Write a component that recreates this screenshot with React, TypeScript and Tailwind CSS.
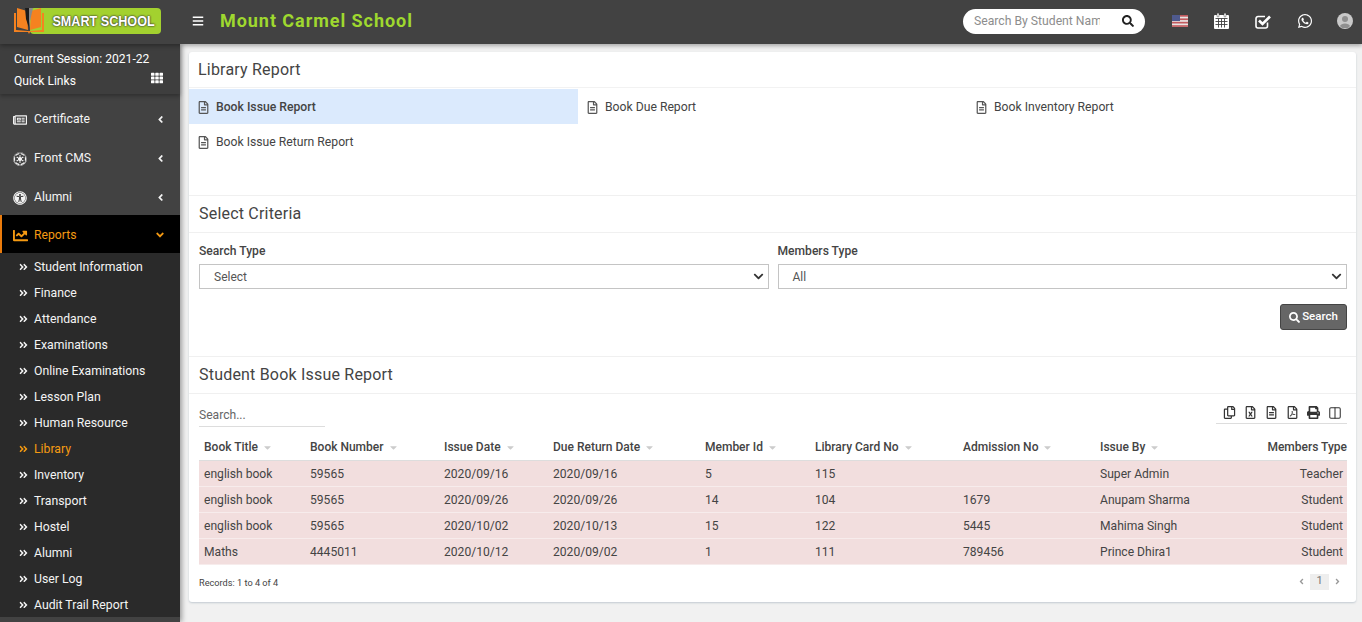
import {
  FaAngleDoubleRight,
  FaAngleDown,
  FaAngleLeft,
  FaBars,
  FaCaretDown,
  FaChartLine,
  FaChevronDown,
  FaEmpire,
  FaPrint,
  FaRegCopy,
  FaRegFileAlt,
  FaRegFileExcel,
  FaRegFilePdf,
  FaRegNewspaper,
  FaSearch,
  FaTh,
  FaUniversalAccess,
  FaWhatsapp,
} from "react-icons/fa";
import { Columns2 } from "lucide-react";

const subMenu = [
  "Student Information",
  "Finance",
  "Attendance",
  "Examinations",
  "Online Examinations",
  "Lesson Plan",
  "Human Resource",
  "Library",
  "Inventory",
  "Transport",
  "Hostel",
  "Alumni",
  "User Log",
  "Audit Trail Report",
];

const columns = [
  { label: "Book Title", width: "w-[106px]" },
  { label: "Book Number", width: "w-[134px]" },
  { label: "Issue Date", width: "w-[109px]" },
  { label: "Due Return Date", width: "w-[152px]" },
  { label: "Member Id", width: "w-[110px]" },
  { label: "Library Card No", width: "w-[148px]" },
  { label: "Admission No", width: "w-[137px]" },
  { label: "Issue By", width: "w-[122px]" },
];

const rows = [
  ["english book", "59565", "2020/09/16", "2020/09/16", "5", "115", "", "Super Admin", "Teacher"],
  ["english book", "59565", "2020/09/26", "2020/09/26", "14", "104", "1679", "Anupam Sharma", "Student"],
  ["english book", "59565", "2020/10/02", "2020/10/13", "15", "122", "5445", "Mahima Singh", "Student"],
  ["Maths", "4445011", "2020/10/12", "2020/09/02", "1", "111", "789456", "Prince Dhira1", "Student"],
];

function Logo() {
  return (
    <div className="flex h-[26px] w-[147px] items-center">
      <svg width="30" height="26" viewBox="0 0 30 26" className="z-10 -mr-[14px] shrink-0">
        <path d="M0 5 L0 24 L14 24 L15 26 L16 24 L30 24 L30 5 L28 5 L28 22 L16 23 L14 23 L2 22 L2 5 Z" fill="#f58220" />
        <path d="M3 0 L13 3 L14 22 L3 19 Z" fill="#f58220" />
        <path d="M27 0 L17 3 L16 22 L27 19 Z" fill="#f58220" />
        <path d="M11 0 L19 0 L16 13 L15 20 L14 13 Z" fill="#8a8a8a" />
        <path d="M11 0 L15 0 L15 20 L12 11 Z" fill="#1c1c1c" />
      </svg>
      <div className="flex h-[26px] flex-1 items-center justify-end rounded-[4px] bg-[#a3d12f] pr-[6px]">
        <span className="origin-right scale-x-[0.84] whitespace-nowrap font-['Liberation_Sans',sans-serif] text-[15px] font-bold text-white [text-shadow:0_0_2px_#333,0_0_2px_#333]">
          SMART SCHOOL
        </span>
      </div>
    </div>
  );
}

function Flag() {
  return (
    <svg width="16" height="12" viewBox="0 0 16 12">
      <rect width="16" height="12" fill="#e8e4e4" />
      <rect width="16" height="1.7" y="0" fill="#c25a5e" />
      <rect width="16" height="1.7" y="3.4" fill="#c25a5e" />
      <rect width="16" height="1.7" y="6.8" fill="#c25a5e" />
      <rect width="16" height="1.7" y="10.2" fill="#c25a5e" />
      <rect width="8" height="6" fill="#4f5a8e" />
    </svg>
  );
}

function CalendarIcon() {
  return (
    <svg width="15" height="16" viewBox="0 0 15 16" fill="#fff">
      <path d="M1 2 H14 A1 1 0 0 1 15 3 V15 A1 1 0 0 1 14 16 H1 A1 1 0 0 1 0 15 V3 A1 1 0 0 1 1 2 Z" />
      <rect x="3" y="0" width="2" height="4" rx="1" stroke="#424242" strokeWidth="0.5" />
      <rect x="10" y="0" width="2" height="4" rx="1" stroke="#424242" strokeWidth="0.5" />
      <path d="M1.5 5.5 H13.5 M1.5 8.5 H13.5 M1.5 11.5 H13.5 M4.5 5.5 V14.5 M7.5 5.5 V14.5 M10.5 5.5 V14.5" stroke="#424242" strokeWidth="0.9" />
    </svg>
  );
}

function CheckIcon() {
  return (
    <svg width="16" height="15" viewBox="0 0 16 15" fill="none" stroke="#fff">
      <path d="M12.5 8.5 V12 A2 2 0 0 1 10.5 14 H3 A2 2 0 0 1 1 12 V4.5 A2 2 0 0 1 3 2.5 H10" strokeWidth="1.6" />
      <path d="M4 6.5 L7.5 10 L15 2.5" strokeWidth="2.6" />
    </svg>
  );
}

function Avatar() {
  return (
    <svg width="16" height="16" viewBox="0 0 16 16" className="-ml-[2px]">
      <circle cx="8" cy="8" r="8" fill="#c9c9c9" />
      <circle cx="8" cy="6" r="3" fill="#8f8f8f" />
      <path d="M3 13 C4 9.5 12 9.5 13 13 L11 15 L5 15 Z" fill="#8f8f8f" />
    </svg>
  );
}

function MenuItem({ icon, label }: { icon: React.ReactNode; label: string }) {
  return (
    <div className="flex h-[39px] items-center pl-[13px] pr-[14px] pt-[4px] text-[#f4f4f4]">
      <span className="flex w-[21px] justify-start text-[14px]">{icon}</span>
      <span className="flex-1 text-[12.2px]">{label}</span>
      <FaAngleLeft className="text-[11px]" />
    </div>
  );
}

function ReportLink({ label, active }: { label: string; active?: boolean }) {
  return (
    <div className={`flex h-[35px] items-center pl-[8px] pt-[1px] text-[12.2px] text-[#444] ${active ? "bg-[#dbeafd] font-medium" : ""}`}>
      <FaRegFileAlt className="mr-[6px] text-[13px] text-[#555]" />
      {label}
    </div>
  );
}

function SelectBox({ label, value }: { label: string; value: string }) {
  return (
    <div className="flex-1">
      <div className="mb-[3px] text-[12.1px] font-medium leading-[19px] text-[#444]">{label}</div>
      <div className="flex h-[25px] items-center justify-between border border-[#c4c4c4] bg-white pl-[14px] pr-[4px] text-[12px] text-[#555]">
        {value}
        <FaChevronDown className="text-[11px] text-[#333]" />
      </div>
    </div>
  );
}

export default function App() {
  return (
    <div className="flex h-screen flex-col overflow-hidden bg-[#f1f1f1] font-['Roboto',sans-serif]">
      <header className="relative z-20 flex h-[44px] shrink-0 items-center bg-[#424242] shadow-[0_2px_4px_rgba(0,0,0,0.3)]">
        <div className="flex w-[180px] shrink-0 justify-start pb-[2px] pl-[14px]">
          <Logo />
        </div>
        <FaBars className="mb-[2px] ml-[12px] text-[12px] text-white" />
        <div className="mb-[3px] ml-[16px] text-[18px] font-bold tracking-[0.95px] text-[#9fd82f]">Mount Carmel School</div>
        <div className="mb-[2px] ml-auto flex items-center text-white">
          <div className="flex h-[25px] w-[182px] items-center justify-between overflow-hidden rounded-full bg-white pl-[11px] pr-[11px]">
            <input
              placeholder="Search By Student Name"
              className="w-[126px] bg-transparent text-[12.2px] outline-none placeholder:text-[#8d8d8d]"
            />
            <FaSearch className="text-[12px] text-[#222]" />
          </div>
          <div className="ml-[27px] flex items-center gap-[26px] pr-[9px]">
            <Flag />
            <CalendarIcon />
            <CheckIcon />
            <FaWhatsapp className="text-[16px]" />
            <Avatar />
          </div>
        </div>
      </header>

      <div className="flex min-h-0 flex-1">
        <aside className="relative z-10 w-[180px] shrink-0 bg-[#424242] shadow-[2px_0_5px_rgba(0,0,0,0.35)]">
          <div className="h-[50px] bg-[#3e3e3e] pl-[14px] pr-[17px] pt-[4px] text-[12.1px] leading-[22px] text-white shadow-[0_2px_4px_rgba(0,0,0,0.3)]">
            <div>Current Session: 2021-22</div>
            <div className="flex items-center justify-between">
              Quick Links
              <FaTh className="-mt-[6px] text-[12px]" />
            </div>
          </div>
          <div className="pt-[4px]">
            <MenuItem icon={<FaRegNewspaper />} label="Certificate" />
            <MenuItem icon={<FaEmpire />} label="Front CMS" />
            <MenuItem icon={<FaUniversalAccess />} label="Alumni" />
            <div className="flex h-[38px] items-center border-l-2 border-[#ea7b0c] bg-black pl-[11px] pr-[14px] pt-[2px] text-[#f59a12]">
              <span className="w-[21px] text-[15px]">
                <FaChartLine />
              </span>
              <span className="flex-1 text-[12.2px]">Reports</span>
              <FaAngleDown className="text-[12px]" />
            </div>
            <div className="bg-[#2a2a2a]">
              {subMenu.map((item) => (
                <div
                  key={item}
                  className={`flex h-[26px] items-center pl-[19px] pt-[2px] text-[12.25px] ${item === "Library" ? "text-[#f59a12]" : "text-[#f4f4f4]"}`}
                >
                  <FaAngleDoubleRight className="mr-[6px] w-[9px] text-[10px]" />
                  {item}
                </div>
              ))}
            </div>
          </div>
        </aside>

        <main className="min-w-0 flex-1 pl-[9px] pr-[6px] pt-[8px]">
          <div className="h-[550px] rounded-[3px] bg-white text-[#444] shadow-[0_1px_2px_rgba(60,90,120,0.25)]">
            <div className="flex h-[36px] items-center border-b border-[#f2f2f2] pl-[9px] text-[16px] tracking-[0.2px]">Library Report</div>
            <div className="grid h-[108px] grid-cols-3 content-start border-b border-[#f0f0f0] pt-[1px]">
              <ReportLink label="Book Issue Report" active />
              <ReportLink label="Book Due Report" />
              <ReportLink label="Book Inventory Report" />
              <ReportLink label="Book Issue Return Report" />
            </div>

            <div className="flex h-[37px] items-center border-b border-[#f0f0f0] pl-[10px] text-[16px] tracking-[0.2px]">Select Criteria</div>
            <div className="flex h-[124px] flex-col border-b border-[#f0f0f0] pl-[10px] pr-[9px] pt-[9px]">
              <div className="flex gap-[9px]">
                <SelectBox label="Search Type" value="Select" />
                <SelectBox label="Members Type" value="All" />
              </div>
              <button className="ml-auto mt-[15px] flex h-[26px] w-[67px] items-center justify-center gap-[2px] rounded-[3px] border border-[#444] bg-[#666] text-[11.5px] font-medium text-white">
                <FaSearch className="text-[11px]" />
                Search
              </button>
            </div>

            <div className="flex h-[37px] items-center border-b border-[#f0f0f0] pl-[10px] text-[16px] tracking-[0.2px]">Student Book Issue Report</div>
            <div className="pl-[10px] pr-[9px]">
              <div className="flex items-start justify-between pt-[9px]">
                <input
                  placeholder="Search..."
                  className="h-[24px] w-[126px] border-b border-[#ddd] bg-transparent text-[12.1px] outline-none placeholder:text-[#666]"
                />
                <div className="flex h-[21px] w-[131px] items-center justify-end gap-[8px] border-b border-[#ddd] pb-[1px] pr-[5px] text-[13px] text-[#333]">
                  <FaRegCopy />
                  <FaRegFileExcel />
                  <FaRegFileAlt />
                  <FaRegFilePdf />
                  <FaPrint />
                  <Columns2 size={14} strokeWidth={1.8} />
                </div>
              </div>
              <table className="mt-[7px] w-full table-fixed border-collapse text-[12.1px]">
                <thead>
                  <tr className="h-[26px] border-b border-[#ddd] text-[12px]">
                    {columns.map((col) => (
                      <th key={col.label} className={`${col.width} whitespace-nowrap pl-[5px] text-left font-medium`}>
                        {col.label}
                        <FaCaretDown className="ml-[4px] inline text-[11px] text-[#ccc]" />
                      </th>
                    ))}
                    <th className="whitespace-nowrap text-right font-medium">Members Type</th>
                  </tr>
                </thead>
                <tbody>
                  {rows.map((row, i) => (
                    <tr key={i} className="h-[26px] border-b border-[#f7ecec] bg-[#f2dede]">
                      {row.map((cell, j) => (
                        <td key={j} className={j === 8 ? "pr-[4px] pt-[2px] text-right" : "pl-[5px] pt-[2px]"}>
                          {cell}
                        </td>
                      ))}
                    </tr>
                  ))}
                </tbody>
              </table>
              <div className="mt-[8px] flex items-start justify-between text-[9.2px]">
                <span className="pt-[3px]">Records: 1 to 4 of 4</span>
                <div className="mt-[1px] flex items-center gap-[4px] pr-[5px] text-[#999]">
                  <FaAngleLeft className="text-[9px]" />
                  <span className="flex h-[16px] w-[19px] items-center justify-center bg-[#eee] text-[11px] text-[#777]">1</span>
                  <FaAngleLeft className="rotate-180 text-[9px]" />
                </div>
              </div>
            </div>
          </div>
        </main>
      </div>
    </div>
  );
}
